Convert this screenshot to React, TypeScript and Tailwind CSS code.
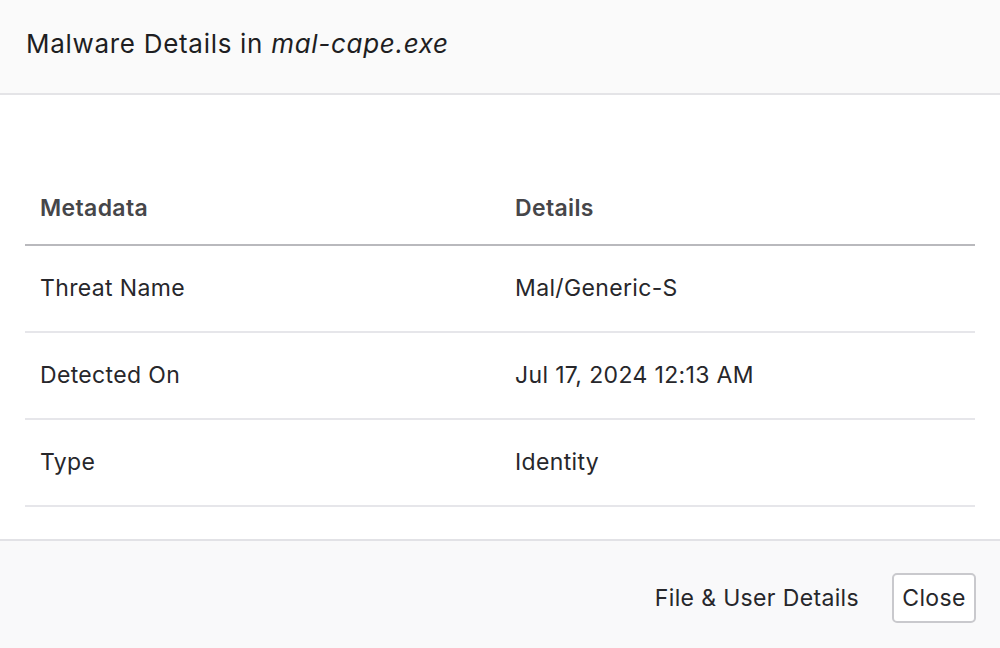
import React from "react";

const rows = [
  { k: "Threat Name", v: "Mal/Generic-S" },
  { k: "Detected On", v: "Jul 17, 2024 12:13 AM" },
  { k: "Type", v: "Identity" },
];

export default function App() {
  return (
    <div
      className="w-[1000px] h-[648px] bg-white flex flex-col overflow-hidden text-[#222226]"
      style={{ fontFamily: "Inter, 'Noto Sans', sans-serif" }}
    >
      <div className="h-[95px] shrink-0 bg-[#fafafa] border-b-2 border-[#e4e4e7] flex items-center px-[26px] pb-[6px]">
        <h1 className="text-[26px] tracking-[0.7px] font-normal text-[#1e1e22]">
          Malware Details in <i>mal-cape.exe</i>
        </h1>
      </div>
      <div className="px-[25px] pt-[77px] pb-[32px] shrink-0">
        <div className="grid grid-cols-2 h-[74px] border-b-2 border-[#b9b9bd] items-center">
          <div className="pl-[15px] text-[23px] tracking-[0.35px] font-semibold text-[#464649]">Metadata</div>
          <div className="pl-[15px] text-[23px] tracking-[0.35px] font-semibold text-[#464649]">Details</div>
        </div>
        {rows.map((r) => (
          <div key={r.k} className="grid grid-cols-2 h-[87px] border-b-2 border-[#e6e6ea] items-center">
            <div className="pl-[15px] text-[23px] tracking-[0.35px] text-[#27272b]">{r.k}</div>
            <div className="pl-[15px] text-[23px] tracking-[0.35px] text-[#27272b]">{r.v}</div>
          </div>
        ))}
      </div>
      <div className="flex-1 bg-[#f9f9fa] border-t-2 border-[#e2e2e6] flex justify-end items-start pt-[32px] pr-[24px] gap-[33px]">
        <button className="h-[50px] text-[23px] tracking-[0.35px] text-[#27272b] leading-none">File &amp; User Details</button>
        <button className="h-[50px] w-[84px] text-[23px] tracking-[0.35px] text-[#27272b] bg-white border-2 border-[#c9c9cd] rounded-[5px] leading-none">
          Close
        </button>
      </div>
    </div>
  );
}
